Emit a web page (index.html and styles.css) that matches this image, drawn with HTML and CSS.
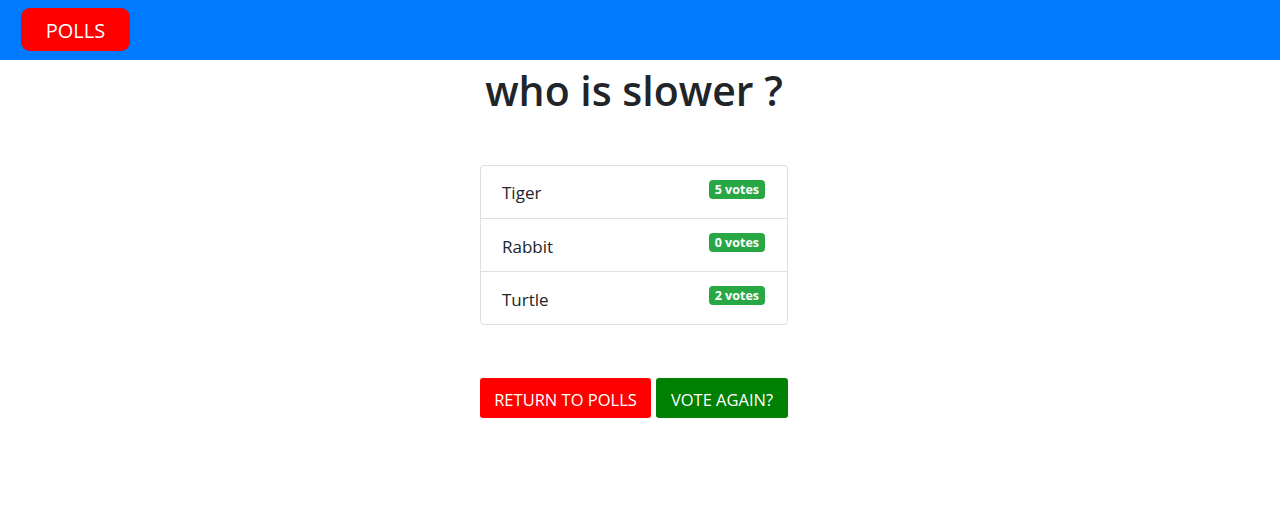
FILE: index.html
```html
<!DOCTYPE html>
<html>
<head>
<meta charset="utf-8">
<link rel="stylesheet" href="styles.css">
</head>
<body>
<nav class="navbar">
  <a class="brand">POLLS</a>
</nav>
<main class="main">
  <h1 class="title">who is slower ?</h1>
  <ul class="list">
    <li class="item"><span>Tiger</span><span class="badge">5 votes</span></li>
    <li class="item"><span>Rabbit</span><span class="badge">0 votes</span></li>
    <li class="item"><span>Turtle</span><span class="badge">2 votes</span></li>
  </ul>
  <div class="actions">
    <button class="btn btn-red">RETURN TO POLLS</button>
    <button class="btn btn-green">VOTE AGAIN?</button>
  </div>
</main>
</body>
</html>
```
FILE: styles.css
```css
* { box-sizing: border-box; }
body {
  margin: 0;
  font-family: "Open Sans", "Noto Sans", sans-serif;
  color: #212529;
  background: #fff;
}
.navbar {
  background: #007bff;
  height: 60px;
  padding: 8px 21px;
  display: flex;
  align-items: flex-start;
}
.brand {
  background: #ff0000;
  color: #fff;
  font-size: 20px;
  width: 109px;
  height: 43px;
  border-radius: 9px;
  padding-top: 2px;
  display: flex;
  align-items: center;
  justify-content: center;
}
.main {
  display: flex;
  flex-direction: column;
  align-items: center;
  padding-right: 12px;
}
.title {
  margin: -2px 0 0;
  font-size: 41px;
  font-weight: 600;
  line-height: 64px;
  letter-spacing: 0;
}
.list {
  list-style: none;
  margin: 43px 0 0;
  padding: 0;
  width: 308px;
  border: 1px solid #dfdfdf;
  border-radius: 4px;
}
.item {
  height: 53px;
  padding: 0 22px 0 21px;
  display: flex;
  justify-content: space-between;
  align-items: flex-start;
  font-size: 17px;
  border-top: 1px solid #dfdfdf;
}
.item:first-child { border-top: none; height: 52px; }
.item span:first-child { margin-top: 16px; }
.item:first-child span:first-child { margin-top: 15px; }
.badge {
  margin-top: 14px;
  background: #28a745;
  color: #fff;
  font-size: 12.5px;
  font-weight: 700;
  height: 19px;
  line-height: 19px;
  padding: 0 6px;
  border-radius: 4px;
}
.actions {
  margin-top: 53px;
  width: 308px;
  display: flex;
  gap: 5px;
}
.btn {
  height: 40px;
  border: none;
  border-radius: 3px;
  color: #fff;
  font-family: inherit;
  font-size: 16.5px;
  padding: 2px 8px 0;
}
.btn-red { background: #ff0000; width: 171px; }
.btn-green { background: #008000; width: 132px; }
```
